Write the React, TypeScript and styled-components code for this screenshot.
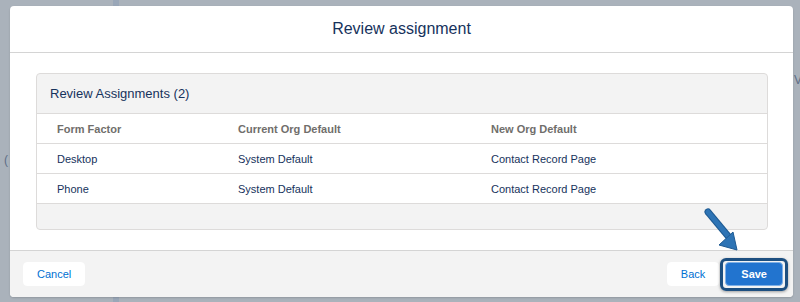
import styled, { createGlobalStyle } from "styled-components";

const GlobalStyle = createGlobalStyle`
  html, body {
    margin: 0;
    padding: 0;
    background: #aab2bb;
    font-family: "Liberation Sans", Arial, sans-serif;
  }
`

const Page = styled.div`
  position: relative;
  width: 800px;
  height: 302px;
  overflow: hidden;
  background: #aab2bb;
  padding: 6px 0 0 10px;
  box-sizing: border-box;
`

const BackdropLine = styled.div<{ $left: number }>`
  position: absolute;
  top: 0;
  bottom: 0;
  left: ${p => p.$left}px;
  width: 6px;
  background: #9aa7b8;
`

const BackdropGlyph = styled.span<{ $left: number; $top: number }>`
  position: absolute;
  left: ${p => p.$left}px;
  top: ${p => p.$top}px;
  font-size: 12px;
  color: #5d6e86;
`

const Modal = styled.div`
  position: relative;
  width: 783px;
  height: 291px;
  background: #fff;
  border-radius: 4px;
  overflow: hidden;
  display: flex;
  flex-direction: column;
  box-shadow: 0 1px 2px rgba(0, 0, 0, 0.15);
`

const Header = styled.div`
  height: 46px;
  border-bottom: 1px solid #d4d4d4;
  display: flex;
  align-items: center;
  justify-content: center;
  h2 {
    margin: 0;
    font-size: 16px;
    font-weight: 400;
    color: #16325c;
  }
`

const Body = styled.div`
  padding: 20px 25px 20px 26px;
  height: 157px;
`

const Card = styled.div`
  border: 1px solid #dddbda;
  border-radius: 4px;
  overflow: hidden;
  background: #f3f3f3;
`

const CardHeader = styled.div`
  height: 39px;
  display: flex;
  align-items: center;
  padding-left: 13px;
  font-size: 13px;
  color: #16325c;
  border-bottom: 1px solid #dddbda;
`

const Row = styled.div<{ $head?: boolean }>`
  display: grid;
  grid-template-columns: 181px 253px 1fr;
  height: 29px;
  align-items: center;
  padding-left: 20px;
  background: #fff;
  border-bottom: 1px solid #dddbda;
  font-size: 11px;
  color: ${p => (p.$head ? "#706e6b" : "#16325c")};
  font-weight: ${p => (p.$head ? 700 : 400)};
`

const CardFooter = styled.div`
  height: 25px;
`

const Footer = styled.div`
  flex: 1;
  background: #f3f3f3;
  border-top: 1px solid #d4d4d4;
  display: flex;
  align-items: flex-start;
  padding: 11px 10px 0 13px;
`

const Button = styled.button<{ $brand?: boolean }>`
  height: 24px;
  padding: 0 ${p => (p.$brand ? 15 : 13)}px;
  border-radius: 4px;
  font-family: inherit;
  font-size: 11px;
  border: 1px solid ${p => (p.$brand ? "#7fb0e6" : "#fff")};
  background: ${p => (p.$brand ? "#2274cf" : "#fff")};
  color: ${p => (p.$brand ? "#fff" : "#0070d2")};
  font-weight: ${p => (p.$brand ? 700 : 400)};
`

const Spacer = styled.div`
  flex: 1;
`

const Highlight = styled.div`
  position: relative;
  margin-left: 6px;
  &::after {
    content: "";
    position: absolute;
    inset: -4px -5px -5px -5px;
    border: 3px solid #1d4f80;
    border-radius: 6px;
    box-shadow: 0 1px 3px rgba(0, 0, 0, 0.35);
    pointer-events: none;
  }
`

const Arrow = styled.svg`
  position: absolute;
  left: 700px;
  top: 205px;
`

const rows = [
  ["Desktop", "System Default", "Contact Record Page"],
  ["Phone", "System Default", "Contact Record Page"],
]

export default function App() {
  return (
    <>
      <GlobalStyle />
      <Page>
        <BackdropLine $left={113} />
        <BackdropGlyph $left={4} $top={153}>(</BackdropGlyph>
        <BackdropGlyph $left={794} $top={73}>V</BackdropGlyph>
        <Modal>
          <Header>
            <h2>Review assignment</h2>
          </Header>
          <Body>
            <Card>
              <CardHeader>Review Assignments (2)</CardHeader>
              <Row $head>
                <span>Form Factor</span>
                <span>Current Org Default</span>
                <span>New Org Default</span>
              </Row>
              {rows.map(r => (
                <Row key={r[0]}>
                  {r.map(c => <span key={c}>{c}</span>)}
                </Row>
              ))}
              <CardFooter />
            </Card>
          </Body>
          <Footer>
            <Button>Cancel</Button>
            <Spacer />
            <Button>Back</Button>
            <Highlight>
              <Button $brand>Save</Button>
            </Highlight>
          </Footer>
        </Modal>
        <Arrow width="50" height="52" viewBox="0 0 50 52">
          <line x1="8" y1="7" x2="28" y2="31" stroke="#1e5a92" strokeWidth="7" strokeLinecap="round" />
          <line x1="8" y1="7" x2="28" y2="31" stroke="#2e74b5" strokeWidth="5" strokeLinecap="round" />
          <polygon points="19,40 33,27 37,45" fill="#2e74b5" stroke="#1e5a92" strokeWidth="1" strokeLinejoin="round" />
        </Arrow>
      </Page>
    </>
  )
}
